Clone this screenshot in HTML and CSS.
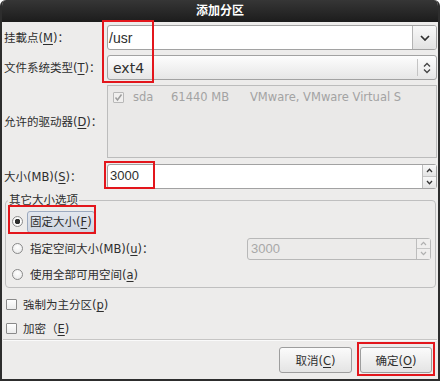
FILE: index.html
```html
<!DOCTYPE html>
<html lang="zh-CN">
<head>
  <meta charset="UTF-8" />
  <title>添加分区</title>
  <link rel="stylesheet" href="styles.css">
</head>
<body>
  <div class="dialog">
    <div class="titlebar">添加分区</div>
    <div class="content">
      <div class="form-grid">
        <label class="field-label">挂載点(<u>M</u>)：</label>
        <div class="combo combo-entry">
          <span class="combo-text mount">/usr</span>
          <span class="combo-btn">
            <svg width="10" height="6" viewBox="0 0 10 6"><path d="M1 1l4 4 4-4" fill="none" stroke="#2e2e2e" stroke-width="1.7"/></svg>
          </span>
        </div>

        <label class="field-label">文件系统类型(<u>T</u>)：</label>
        <div class="combo combo-select">
          <span class="combo-text fs">ext4</span>
          <span class="combo-sep"></span>
          <span class="combo-arrows">
            <svg width="8" height="12" viewBox="0 0 8 12"><path d="M1 4.5L4 1.5 7 4.5M1 7.5L4 10.5 7 7.5" fill="none" stroke="#444" stroke-width="1.3"/></svg>
          </span>
        </div>

        <label class="field-label">允许的驱动器(<u>D</u>)：</label>
        <div class="drive-list">
          <div class="drive-row">
            <span class="check check-off">
              <svg width="11" height="11" viewBox="0 0 11 11"><path d="M2.5 5.5l2 2.5 4-5.5" fill="none" stroke="#9d9d9d" stroke-width="1.5"/></svg>
            </span>
            <span>sda</span>
            <span>61440 MB</span>
            <span>VMware, VMware Virtual S</span>
          </div>
        </div>

        <label class="field-label">大小(MB)(<u>S</u>)：</label>
        <div class="spin">
          <span class="spin-text">3000</span>
          <span class="spin-btns">
            <span class="spin-btn"><svg width="7" height="5" viewBox="0 0 7 5"><path d="M1 4L3.5 1.3 6 4" fill="none" stroke="#333" stroke-width="1.3"/></svg></span>
            <span class="spin-btn"><svg width="7" height="5" viewBox="0 0 7 5"><path d="M1 1L3.5 3.7 6 1" fill="none" stroke="#333" stroke-width="1.3"/></svg></span>
          </span>
        </div>
      </div>

      <fieldset class="frame">
        <legend>其它大小选项</legend>
        <div class="frame-body">
          <div class="opt">
            <span class="radio radio-on"></span>
            <span class="opt-label focused">固定大小(<u>F</u>)</span>
          </div>
          <div class="opt">
            <span class="radio"></span>
            <span class="opt-label">指定空间大小(MB)(<u>u</u>)：</span>
            <div class="spin spin-disabled">
              <span class="spin-text">3000</span>
              <span class="spin-btns">
                <span class="spin-btn"><svg width="7" height="5" viewBox="0 0 7 5"><path d="M1 4L3.5 1.3 6 4" fill="none" stroke="#b0b0b0" stroke-width="1.2"/></svg></span>
                <span class="spin-btn"><svg width="7" height="5" viewBox="0 0 7 5"><path d="M1 1L3.5 3.7 6 1" fill="none" stroke="#b0b0b0" stroke-width="1.2"/></svg></span>
              </span>
            </div>
          </div>
          <div class="opt opt-last">
            <span class="radio"></span>
            <span class="opt-label">使用全部可用空间(<u>a</u>)</span>
          </div>
        </div>
      </fieldset>

      <div class="checks">
        <div class="check-row">
          <span class="check"></span>
          <span>強制为主分区(<u>p</u>)</span>
        </div>
        <div class="check-row check-row-last">
          <span class="check"></span>
          <span>加密（<u>E</u>)</span>
        </div>
      </div>

      <div class="separator"></div>

      <div class="buttons">
        <button class="btn btn-cancel">取消(<u>C</u>)</button>
        <button class="btn btn-ok">确定(<u>O</u>)</button>
      </div>
    </div>
  </div>

  <div class="mark mark-mount"></div>
  <div class="mark mark-size"></div>
  <div class="mark mark-fixed"></div>
  <div class="mark mark-ok"></div>
</body>
</html>
```

FILE: styles.css
```css
* {
  box-sizing: border-box;
}
body {
  margin: 0;
  background: #fff;
  font-family: "DejaVu Sans", "Noto Sans CJK SC", sans-serif;
  font-size: 11.5px;
  color: #2e2e2e;
}
u {
  text-decoration-thickness: 1px;
  text-underline-offset: 2px;
}

/* window */
.dialog {
  width: 440px;
  height: 381px;
  background: #edeceb;
  border: 2px solid #2d2d2d;
  border-top: 0;
  border-radius: 6px 6px 0 0;
  overflow: hidden;
  display: flex;
  flex-direction: column;
}
.titlebar {
  height: 22px;
  flex-shrink: 0;
  background: linear-gradient(#363636, #1c1c1c);
  color: #fff;
  font-weight: bold;
  font-size: 12px;
  line-height: 22px;
  text-align: center;
}
.content {
  flex: 1;
  padding: 3px 1px 0 2px;
  display: flex;
  flex-direction: column;
}

/* top form */
.form-grid {
  display: grid;
  grid-template-columns: 103px 1fr;
  grid-template-rows: 25px 25px 74px 25px;
  row-gap: 5px;
}
.field-label {
  align-self: center;
  line-height: 14px;
  white-space: nowrap;
}
.combo {
  display: flex;
  align-items: center;
  height: 25px;
  border: 1px solid #a2a2a2;
  border-radius: 3px;
}
.combo-entry {
  background: #fff;
}
.combo-text {
  flex: 1;
  white-space: nowrap;
}
.mount {
  padding-left: 1px;
  font-family: "Liberation Sans", sans-serif;
  font-size: 14px;
}
.fs {
  padding-left: 5px;
  font-size: 14px;
}
.combo-btn {
  width: 24px;
  height: 100%;
  display: flex;
  align-items: center;
  justify-content: center;
  border-left: 1px solid #b4b4b4;
  background: linear-gradient(#f8f8f8, #e2e2e2);
  border-radius: 0 2px 2px 0;
}
.combo-select {
  background: linear-gradient(#fdfdfd, #e6e6e6);
}
.combo-sep {
  width: 1px;
  height: 17px;
  background: #c4c4c4;
}
.combo-arrows {
  width: 18px;
  display: flex;
  justify-content: center;
}

.drive-list {
  height: 73px;
  border: 1px solid #bcbcbc;
  background: #eae9e8;
  padding: 4px 0 0 5px;
  color: #a3a3a3;
}
.drive-row {
  display: grid;
  grid-template-columns: 20px 38px 79px auto;
  align-items: center;
  height: 12px;
  white-space: nowrap;
}

.spin {
  display: flex;
  height: 25px;
  border: 1px solid #a2a2a2;
  border-radius: 3px;
  background: #fff;
}
.spin-text {
  flex: 1;
  padding-left: 2px;
  font-family: "Liberation Sans", sans-serif;
  font-size: 13px;
  line-height: 22px;
}
.spin-btns {
  width: 14px;
  display: flex;
  flex-direction: column;
  border-left: 1px solid #bdbdbd;
}
.spin-btn {
  flex: 1;
  display: flex;
  align-items: center;
  justify-content: center;
  background: linear-gradient(#f8f8f8, #e4e4e4);
}
.spin-btn + .spin-btn {
  border-top: 1px solid #c6c6c6;
}
.spin-disabled {
  width: 184px;
  height: 22px;
  margin-left: auto;
  margin-right: 4px;
  background: #ecebea;
  border-color: #b8b8b8;
  color: #a8a8a8;
}
.spin-disabled .spin-text {
  line-height: 20px;
  padding-left: 3px;
}
.spin-disabled .spin-btn {
  background: #efeeed;
}

/* size options frame */
.frame {
  margin: 4px 1px 0 1px;
  padding: 0;
  min-width: 0;
  border: 1px solid #bfbfbf;
  border-radius: 4px;
}
.frame legend {
  margin-left: 2px;
  padding: 0 1px;
  line-height: 14px;
}
.frame-body {
  padding-top: 1px;
}
.opt {
  display: flex;
  align-items: center;
  height: 27px;
  padding-left: 6px;
}
.opt-last {
  height: 25px;
}
.radio {
  width: 11px;
  height: 11px;
  flex-shrink: 0;
  border: 1px solid #8a8a8a;
  border-radius: 50%;
  background: radial-gradient(circle at 50% 35%, #fff, #e6e6e6);
}
.radio-on {
  background: radial-gradient(circle, #2f2f2f 0 2.5px, #fff 3px, #e6e6e6);
}
.opt-label {
  margin-left: 4px;
  padding: 0 2px;
  border: 1px solid transparent;
  line-height: 20px;
  white-space: nowrap;
}
.focused {
  background: linear-gradient(#e3e7ee, #cfd6e1);
  border-color: #9ba9bf;
  border-radius: 3px;
}

/* check boxes */
.checks {
  margin-top: 3px;
  padding-left: 2px;
}
.check-row {
  display: flex;
  align-items: center;
  gap: 6px;
  height: 26px;
}
.check-row-last {
  height: 22px;
}
.check {
  width: 11px;
  height: 11px;
  flex-shrink: 0;
  border: 1px solid #8a8a8a;
  border-radius: 1px;
  background: linear-gradient(#fff, #ececec);
}
.check svg {
  display: block;
  margin: -1px;
}
.check-off {
  border-color: #b8b8b8;
  background: #f0efee;
}

.separator {
  height: 2px;
  margin: 0 0 0 -1px;
  border-top: 1px solid #c6c5c4;
  border-bottom: 1px solid #fafafa;
}

.buttons {
  display: flex;
  justify-content: flex-end;
  gap: 8px;
  margin-top: 6px;
  padding-right: 5px;
}
.btn {
  height: 26px;
  padding: 0;
  font: inherit;
  color: #2e2e2e;
  background: linear-gradient(#fbfbfb, #e4e4e4);
  border: 1px solid #9d9d9d;
  border-radius: 3px;
}
.btn-cancel {
  width: 73px;
}
.btn-ok {
  width: 72px;
}

/* red annotation boxes */
.mark {
  position: absolute;
  border: 2px solid #e3161c;
}
.mark-mount {
  left: 102px;
  top: 20px;
  width: 52px;
  height: 63px;
}
.mark-size {
  left: 104px;
  top: 161px;
  width: 51px;
  height: 28px;
}
.mark-fixed {
  left: 8px;
  top: 205px;
  width: 88px;
  height: 29px;
}
.mark-ok {
  left: 357px;
  top: 342px;
  width: 78px;
  height: 34px;
}
```
